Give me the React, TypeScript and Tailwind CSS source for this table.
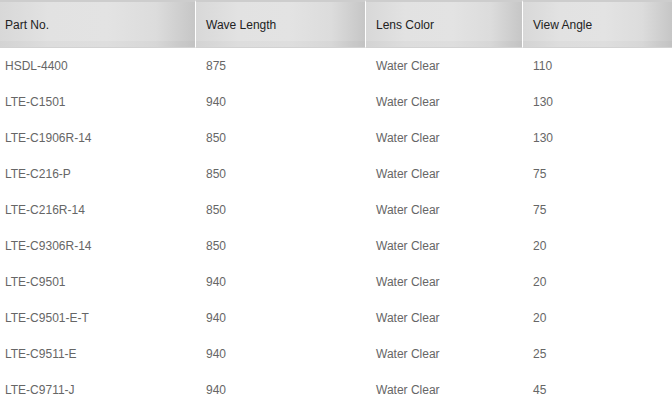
import React from "react";

const rows: [string, string, string, string][] = [
  ["HSDL-4400", "875", "Water Clear", "110"],
  ["LTE-C1501", "940", "Water Clear", "130"],
  ["LTE-C1906R-14", "850", "Water Clear", "130"],
  ["LTE-C216-P", "850", "Water Clear", "75"],
  ["LTE-C216R-14", "850", "Water Clear", "75"],
  ["LTE-C9306R-14", "850", "Water Clear", "20"],
  ["LTE-C9501", "940", "Water Clear", "20"],
  ["LTE-C9501-E-T", "940", "Water Clear", "20"],
  ["LTE-C9511-E", "940", "Water Clear", "25"],
  ["LTE-C9711-J", "940", "Water Clear", "45"],
];

const headBg =
  "bg-[linear-gradient(to_right,#d8d8d8_0%,#e2e2e2_25%,#e3e3e3_55%,#dcdcdc_80%,#c6c6c6_100%)]";

export default function App() {
  const headers = ["Part No.", "Wave Length", "Lens Color", "View Angle"];
  return (
    <div className="w-[672px] h-[405px] overflow-hidden bg-white font-['Liberation_Sans',Arial,sans-serif] text-[12px]">
      <div className="grid grid-cols-[196px_170px_157px_149px]">
        {headers.map((h, i) => (
          <div
            key={h}
            className={`relative h-[48px] flex items-center border-t-2 border-t-[#cdcdcd] border-b border-b-[#d2d2d2] ${headBg} text-[#222] ${
              i < 3 ? "border-r border-r-white" : ""
            } ${i === 0 ? "pl-[5px]" : "pl-[10px]"}`}
          >
            <div className="absolute inset-x-0 bottom-0 h-[6px] bg-[#000]/[0.02]" />
            <span className="relative">{h}</span>
          </div>
        ))}
        {rows.map((r) =>
          r.map((c, i) => (
            <div
              key={r[0] + i}
              className={`h-[36px] flex items-center text-[#666] ${i === 0 ? "pl-[5px]" : "pl-[10px]"}`}
            >
              {c}
            </div>
          ))
        )}
      </div>
    </div>
  );
}
